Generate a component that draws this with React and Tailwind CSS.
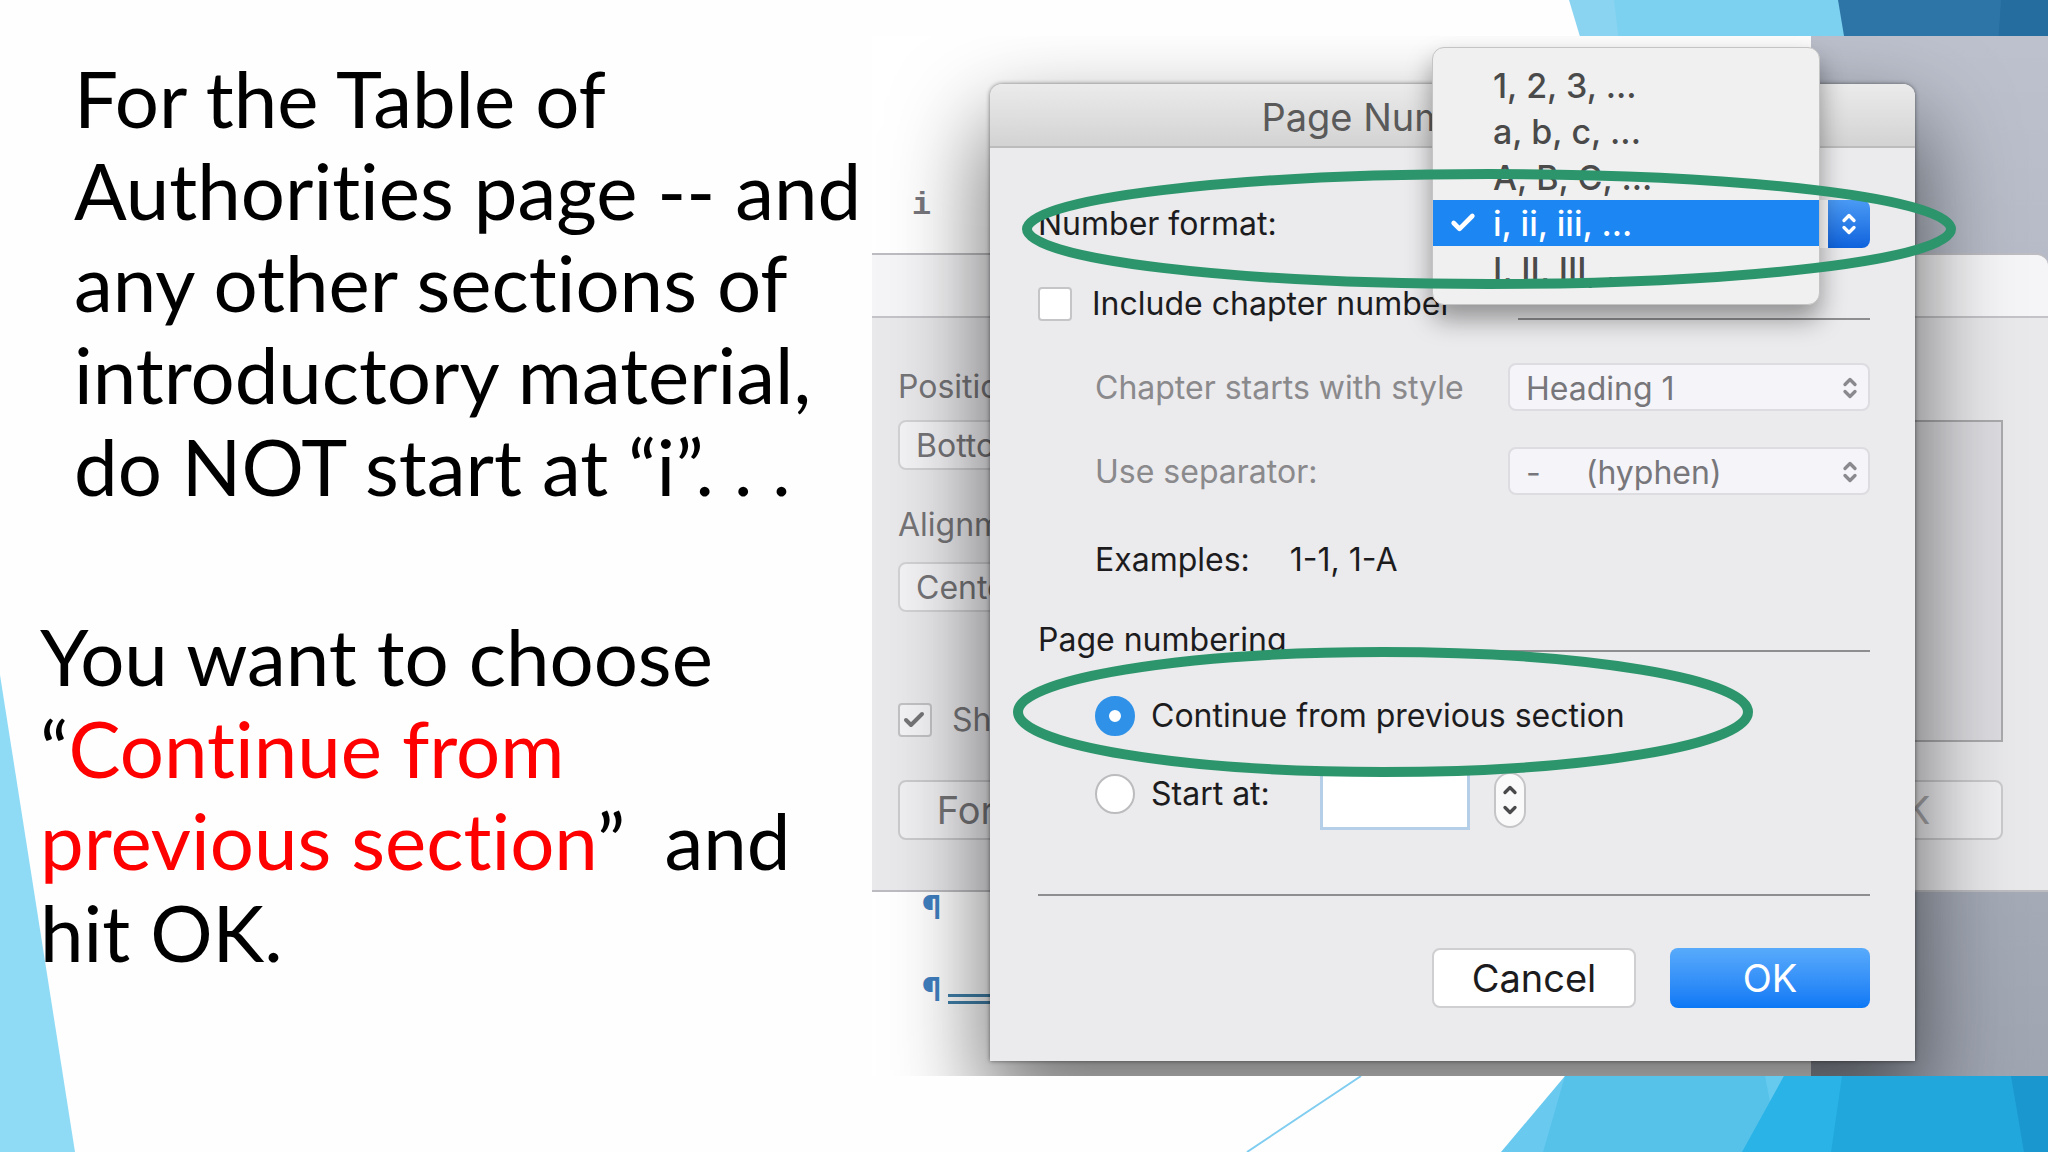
import React from 'react';
import { Check, ChevronDown, ChevronUp } from 'lucide-react';

const numberFormats = ['1, 2, 3, ...', 'a, b, c, ...', 'A, B, C, ...', 'i, ii, iii, ...', 'I, II, III, ...'];

const Backdrop = () => (
  <svg className="absolute inset-0 h-full w-full" viewBox="0 0 2048 1152" preserveAspectRatio="none" aria-hidden="true">
    <polygon points="0,675 75,1152 0,1152" fill="#8fdaf5" />
    {/* top right facets */}
    <polygon points="1569,0 2048,0 2048,60 1587,60" fill="#8ad4f2" />
    <polygon points="1614,0 2048,0 2048,60 1621,60" fill="#7dd1f0" />
    <polygon points="1838,0 2048,0 2048,60 1848,60" fill="#2e75a7" />
    <polygon points="2001,0 2048,0 2048,60 1997,60" fill="#266d9f" />
    {/* bottom right facets */}
    <line x1="1361" y1="1076" x2="1247" y2="1152" stroke="#7fcdf0" strokeWidth="2" />
    <polygon points="1565,1076 2048,1076 2048,1152 1501,1152" fill="#6ac9ef" />
    <polygon points="1565,1076 2048,1076 2048,1152 1543,1152" fill="#56c2ea" />
    <polygon points="1765,1076 1784,1076 1770,1102" fill="#66c9ee" />
    <polygon points="1784,1076 2048,1076 2048,1152 1742,1152" fill="#2ab3e7" />
    <polygon points="1842,1076 2048,1076 2048,1152 1831,1152" fill="#22a7dc" />
    <polygon points="2011,1076 2048,1076 2048,1152 2024,1152" fill="#1a97ce" />
  </svg>
);

const Highlights = () => (
  <svg className="pointer-events-none absolute inset-0 z-20 h-full w-full" viewBox="0 0 2048 1152" preserveAspectRatio="none" aria-hidden="true">
    <g fill="none" stroke="#2c956c" strokeWidth="10">
      <ellipse cx="1489" cy="229" rx="462" ry="55" />
      <ellipse cx="1383" cy="712" rx="365" ry="60" />
    </g>
  </svg>
);

const Arrows = ({ className = '' }) => (
  <span className={`pointer-events-none absolute inset-y-0 flex flex-col items-center justify-center ${className}`}>
    <ChevronUp className="-mb-1 h-5 w-6" strokeWidth={4} />
    <ChevronDown className="-mt-1 h-5 w-6" strokeWidth={4} />
  </span>
);

const DisabledSelect = ({ id, value }) => (
  <div className="relative w-[362px]">
    <select
      id={id}
      disabled
      className="h-12 w-full appearance-none whitespace-pre rounded-lg border-2 border-[#dddce0] bg-[#f5f4f8] px-4 text-[32px] text-[#77767a] opacity-100"
    >
      <option>{value}</option>
    </select>
    <Arrows className="right-2 text-[#8a898d]" />
  </div>
);

const FormatMenu = () => (
  <ul
    role="listbox"
    aria-label="Number formats"
    className="absolute -top-[153px] left-0 w-[388px] rounded-xl border border-[#c4c4c4] bg-[#f0f0f0] pt-3.5 pb-3 shadow-[0_14px_26px_rgba(0,0,0,0.38)]"
  >
    {numberFormats.map((format) => {
      const selected = format === 'i, ii, iii, ...';
      return (
        <li
          key={format}
          role="option"
          aria-selected={selected}
          className={`flex h-[46px] items-center text-[34px] font-medium ${selected ? 'bg-[#1c86f2] text-white' : 'text-[#4a4a4a]'}`}
        >
          <span className="flex w-[60px] justify-center">
            {selected && <Check className="h-8 w-7" strokeWidth={4} />}
          </span>
          {format}
        </li>
      );
    })}
  </ul>
);

// Footer dialog that sits behind the page number dialog
const FooterSheet = () => (
  <section className="absolute inset-x-0 top-[217px] rounded-tr-xl border-y-2 border-[#bdbcc0] bg-[#e9e8eb] text-[32px] whitespace-nowrap text-[#757477]">
    <div className="h-[63px] rounded-tr-xl border-b-2 border-[#c4c3c7] bg-[#f5f4f6]" />
    <div className="flex justify-between pt-[46px] pr-[45px] pb-[50px] pl-[26px]">
      <div className="flex w-[420px] flex-col items-start">
        <label htmlFor="position" className="h-[46px] leading-[46px]">Position:</label>
        <select id="position" disabled className="mt-2.5 h-[50px] w-[360px] appearance-none rounded-lg border-2 border-[#d2d1d4] bg-[#f3f2f5] px-4 opacity-100">
          <option>Bottom of page</option>
        </select>
        <label htmlFor="alignment" className="mt-8 h-[46px] leading-[46px]">Alignment:</label>
        <select id="alignment" disabled className="mt-3.5 h-[50px] w-[360px] appearance-none rounded-lg border-2 border-[#d2d1d4] bg-[#f3f2f5] px-4 opacity-100">
          <option>Center</option>
        </select>
        <label className="relative mt-[84px] flex h-12 items-center gap-5">
          <input type="checkbox" defaultChecked disabled className="h-[34px] w-[34px] appearance-none rounded-sm border-2 border-[#c2c1c4] bg-[#f3f2f5]" />
          <Check className="absolute left-1 h-6 w-6" strokeWidth={4} />
          Show number
        </label>
        <button type="button" className="mt-9 h-[60px] w-[236px] rounded-lg border-2 border-[#cbcacd] bg-[#f0eff2] text-[38px]">Format...</button>
      </div>
      <div className="flex flex-col items-end justify-between pt-[56px]">
        <div className="h-[322px] w-[300px] border-2 border-[#aaa9ac] bg-[#dddce0]" />
        <button type="button" className="h-[60px] w-[200px] rounded-lg border-2 border-[#cbcacd] bg-[#f0eff2] text-[38px] text-[#aaa9ac]">OK</button>
      </div>
    </div>
  </section>
);

const PageNumberDialog = () => (
  <section
    role="dialog"
    aria-labelledby="dialog-title"
    className="relative rounded-t-xl bg-[#ebeaec] text-[32px] text-[#1c1c1e] shadow-[0_44px_90px_6px_rgba(0,0,0,0.55),0_0_4px_rgba(0,0,0,0.5)]"
  >
    <header className="flex h-16 items-center justify-center rounded-t-xl border-b-2 border-[#bcbcbc] bg-linear-to-b from-[#ebebeb] to-[#d3d3d3] pt-1">
      <h2 id="dialog-title" className="text-[38px] text-[#5a5a5a]">Page Number Format</h2>
    </header>
    <form className="pt-[52px] pr-[45px] pb-[53px] pl-12" onSubmit={(e) => e.preventDefault()}>
      <div className="flex h-12 items-center justify-between">
        <label htmlFor="number-format">Number format:</label>
        <div className="relative z-10 w-[438px]">
          <select id="number-format" className="h-12 w-full appearance-none rounded-lg bg-white px-4">
            <option>i, ii, iii, ...</option>
          </select>
          <Arrows className="right-0 w-[42px] rounded-r-lg bg-linear-to-b from-[#4a9af5] to-[#0d62dc] text-white" />
          <FormatMenu />
        </div>
      </div>

      <div className="mt-8 flex h-12 items-center justify-between">
        <label className="flex items-center gap-5">
          <input type="checkbox" className="h-[34px] w-[34px] appearance-none rounded-sm border-2 border-[#c5c4c7] bg-white" />
          Include chapter number
        </label>
        <hr className="mb-2 w-[352px] self-end border-t-2 border-[#8e8e90]" />
      </div>

      <div className="mt-9 flex h-12 items-center justify-between pl-[57px]">
        <label htmlFor="chapter-style" className="text-[#8a898c]">Chapter starts with style</label>
        <DisabledSelect id="chapter-style" value="Heading 1" />
      </div>
      <div className="mt-9 flex h-12 items-center justify-between pl-[57px]">
        <label htmlFor="separator" className="text-[#8a898c]">Use separator:</label>
        <DisabledSelect id="separator" value={'-\u00a0\u00a0\u00a0\u00a0\u00a0(hyphen)'} />
      </div>
      <p className="mt-10 flex h-12 items-center gap-10 pl-[57px]">
        <span>Examples:</span>
        <span>1-1, 1-A</span>
      </p>

      <fieldset className="mt-8">
        <legend className="flex h-12 w-full items-center gap-4">
          Page numbering
          <hr className="mb-3 flex-1 self-end border-t-2 border-[#8e8e90]" />
        </legend>
        <label className="mt-7 flex h-12 items-center gap-4 pl-[57px]">
          <input type="radio" name="numbering" defaultChecked className="h-10 w-10 appearance-none rounded-full border-[14px] border-[#2f92e8] bg-white" />
          Continue from previous section
        </label>
        <div className="mt-8 flex h-[58px] items-start pl-[57px]">
          <label className="flex h-11 w-[225px] items-center gap-4">
            <input type="radio" name="numbering" className="h-10 w-10 appearance-none rounded-full border-2 border-[#bcbbbe] bg-white" />
            Start at:
          </label>
          <input type="text" aria-label="Start at" className="h-full w-[150px] border-[3px] border-[#b5cfe8] bg-white px-2" />
          <button type="button" aria-label="Change start number" className="ml-6 flex h-14 w-8 flex-col items-center justify-between rounded-full border-2 border-[#c5c4c7] bg-[#fafafa] py-1.5 text-[#4a4a4c]">
            <ChevronUp className="h-5 w-5" strokeWidth={4} />
            <ChevronDown className="h-5 w-5" strokeWidth={4} />
          </button>
        </div>
      </fieldset>

      <hr className="mt-16 border-t-2 border-[#8e8e90]" />
      <div className="mt-[52px] flex justify-end gap-[34px] text-[38px]">
        <button type="button" className="h-[60px] w-[204px] rounded-lg border-2 border-[#cfced1] bg-white">Cancel</button>
        <button type="submit" className="h-[60px] w-[200px] rounded-lg bg-linear-to-b from-[#58abfb] to-[#0a78f5] text-white">OK</button>
      </div>
    </form>
  </section>
);

const App = () => (
  <main className="relative grid min-h-screen grid-cols-[109fr_147fr] overflow-hidden bg-[#fefefe] pt-9 pb-[76px]">
    <Backdrop />

    <div className="relative pt-4 font-[Lato,sans-serif] text-[78px] leading-[92px] whitespace-nowrap text-black [font-variant-ligatures:none]">
      <h1 className="pl-[74px]">
        For the Table of<br />
        Authorities page -- and<br />
        any other sections of<br />
        introductory material,<br />
        do NOT start at “i”. . .
      </h1>
      <p className="mt-[98px] pl-10">
        You want to choose<br />
        “<span className="text-[#ff0000]">Continue from<br />
        previous section</span>”&nbsp; and<br />
        hit OK.
      </p>
    </div>

    <div className="relative overflow-hidden bg-linear-to-b from-[#bcc1cd] to-[#9fa5b1] pt-12 pr-[133px] pb-[15px] pl-[118px] font-[Inter,sans-serif]">
      {/* document page with its paragraph marks */}
      <div className="absolute inset-y-0 left-0 w-[939px] bg-white">
        <span className="absolute top-[146px] left-10 font-mono text-[32px] font-bold text-[#77767d]">i</span>
        <span className="absolute top-[848px] left-[50px] text-[32px] font-bold text-[#3f7fc0]">¶</span>
        <span className="absolute top-[930px] left-[50px] text-[32px] font-bold text-[#3f7fc0]">¶</span>
        <span className="absolute top-[958px] left-[76px] h-2.5 w-20 border-y-[3px] border-[#3f7fa8]" />
      </div>
      <FooterSheet />
      <PageNumberDialog />
    </div>

    <Highlights />
  </main>
);

export default App;
